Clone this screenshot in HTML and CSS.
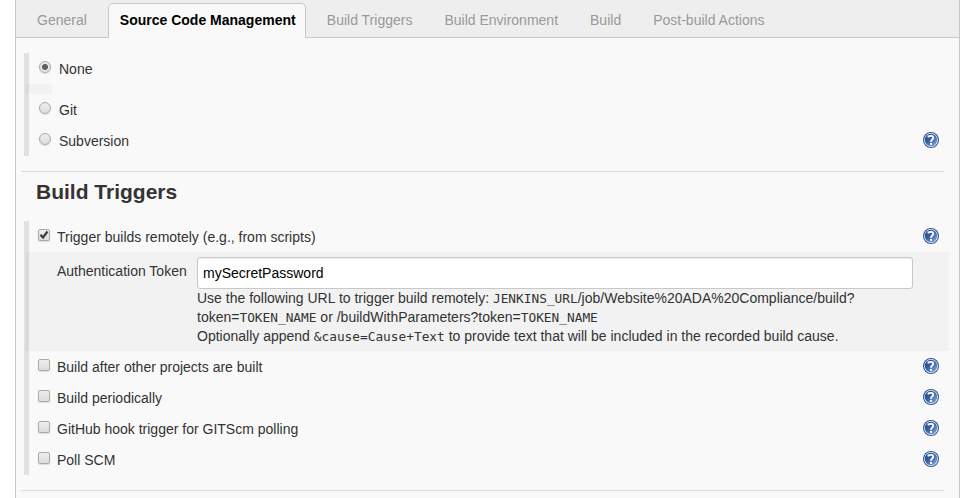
FILE: index.html
```
<!DOCTYPE html>
<html lang="en">
<head>
<meta charset="utf-8">
<title>Job configuration</title>
<link rel="stylesheet" href="styles.css">
</head>
<body>
<svg width="0" height="0" class="defs" aria-hidden="true">
  <defs>
    <linearGradient id="blue" x1="0" y1="0" x2="1" y2="1">
      <stop offset="0" stop-color="#1d4180"/><stop offset=".45" stop-color="#3561a5"/><stop offset="1" stop-color="#8fb0da"/>
    </linearGradient>
    <symbol id="help" viewBox="0 0 16 16">
      <circle cx="8" cy="8" r="8" fill="#2f5597"/>
      <circle cx="8" cy="8" r="6.9" fill="#f4f8ff"/>
      <circle cx="8" cy="8" r="6.2" fill="url(#blue)"/>
      <path d="M5.5 5.6V4.4C6.6 3.7 10.2 3.3 10.2 5.7C10.2 7.3 8 7.6 8 9.7" fill="none" stroke="#fff" stroke-width="1.9"/>
      <rect x="7" y="10.9" width="2" height="2" fill="#fff"/>
    </symbol>
  </defs>
</svg>
<main class="panel">
  <nav class="tabs">
    <a class="tab">General</a>
    <a class="tab active">Source Code Management</a>
    <a class="tab">Build Triggers</a>
    <a class="tab">Build Environment</a>
    <a class="tab">Build</a>
    <a class="tab">Post-build Actions</a>
  </nav>
  <section class="group scm">
    <div class="row"><span class="radio checked"></span><span class="label">None</span></div>
    <div class="stub"></div>
    <div class="row"><span class="radio"></span><span class="label">Git</span></div>
    <div class="row"><span class="radio"></span><span class="label">Subversion</span><svg class="help"><use href="#help"/></svg></div>
  </section>
  <hr>
  <h2>Build Triggers</h2>
  <section class="group">
    <div class="row"><span class="box"><svg class="check" viewBox="0 0 12 12"><path d="M2.5 5.8L5 8.5L9.5 2.5" fill="none" stroke="#3c3c3c" stroke-width="2.2"/></svg></span><span class="label">Trigger builds remotely (e.g., from scripts)</span><svg class="help"><use href="#help"/></svg></div>
    <div class="nested">
      <div class="name">Authentication Token</div>
      <div class="field">
        <input type="text" value="mySecretPassword">
        <div class="desc">Use the following URL to trigger build remotely: <code>JENKINS_URL</code>/job/Website%20ADA%20Compliance/build?<br>token=<code>TOKEN_NAME</code> or /buildWithParameters?token=<code>TOKEN_NAME</code><br>Optionally append <code>&amp;cause=Cause+Text</code> to provide text that will be included in the recorded build cause.</div>
      </div>
    </div>
    <div class="row"><span class="box"></span><span class="label">Build after other projects are built</span><svg class="help"><use href="#help"/></svg></div>
    <div class="row"><span class="box"></span><span class="label">Build periodically</span><svg class="help"><use href="#help"/></svg></div>
    <div class="row"><span class="box"></span><span class="label">GitHub hook trigger for GITScm polling</span><svg class="help"><use href="#help"/></svg></div>
    <div class="row"><span class="box"></span><span class="label">Poll SCM</span><svg class="help"><use href="#help"/></svg></div>
  </section>
  <hr>
</main>
</body>
</html>
```
FILE: styles.css
```
* { box-sizing: border-box; }
body { margin: 0; background: #fff; color: #333; font: 14px/19px "Liberation Sans", Arial, sans-serif; overflow: hidden; }
.defs { position: absolute; }
.panel { width: 945px; height: 498px; margin-left: 15px; background: #f9f9f9; border: solid #c8c8c8; border-width: 0 1px; overflow: hidden; }
.tabs { display: flex; height: 38px; padding: 3px 0 0 5px; background: #eee; border-bottom: 1px solid #c8c8c8; }
.tab { height: 34px; padding: 0 16px; line-height: 34px; color: #999; white-space: nowrap; }
.tab.active { width: 198px; height: 35px; margin: 0 5px 0 5px; padding: 0 11px; line-height: 32px; font-weight: bold; color: #000; background: #f9f9f9; border: 1px solid #c8c8c8; border-bottom: 0; border-radius: 5px 5px 0 0; }
.group { width: 925px; margin-left: 8px; background: linear-gradient(#e0e0e0, #e0e0e0) 0 0 / 5px 100% no-repeat; }
.scm { margin-top: 15px; }
.row { display: flex; height: 31px; padding: 7px 10px 0 14px; }
.scm .row { padding-left: 15px; }
.label { margin: 0 auto 0 7px; line-height: 19px; white-space: nowrap; }
.scm .label { margin-left: 8px; }
.help { width: 16px; height: 16px; margin-top: 0; }
.radio, .box { width: 12px; height: 12px; margin-top: 1px; border: 1px solid #aaa; background: linear-gradient(#eee, #dcdcdc); box-shadow: 0 1px 1px #ddd; }
.radio { border-radius: 50%; }
.radio.checked { background: radial-gradient(circle, #606060 0 2.6px, #e8e8e8 3.4px); }
.box { border-radius: 2px; }
.check { display: block; width: 12px; height: 12px; margin: -1px; overflow: visible; }
.stub { width: 26px; height: 10px; margin-left: 2px; background: rgba(0, 0, 0, .027); }
hr { width: 923px; height: 1px; margin: 15px 0 0 5px; border: 0; background: #dcdcdc; }
h2 { margin: 7px 0 16px 20px; font-size: 21px; line-height: 26px; }
.nested { display: flex; width: 923px; height: 99px; margin-left: 2px; padding: 5px 0 0 31px; background: rgba(0, 0, 0, .027); }
.name { width: 140px; padding-top: 5px; white-space: nowrap; }
.field { width: 716px; }
input { display: block; width: 716px; height: 32px; padding: 0 5px; border: 1px solid #c8c8c8; border-radius: 3px; background: #fff; box-shadow: inset 0 1px 1px rgba(0, 0, 0, .07); color: #000; font: 14px "Liberation Sans", Arial, sans-serif; }
.desc { white-space: nowrap; }
code { font: 12.8px/1 "DejaVu Sans Mono", monospace; }
```
